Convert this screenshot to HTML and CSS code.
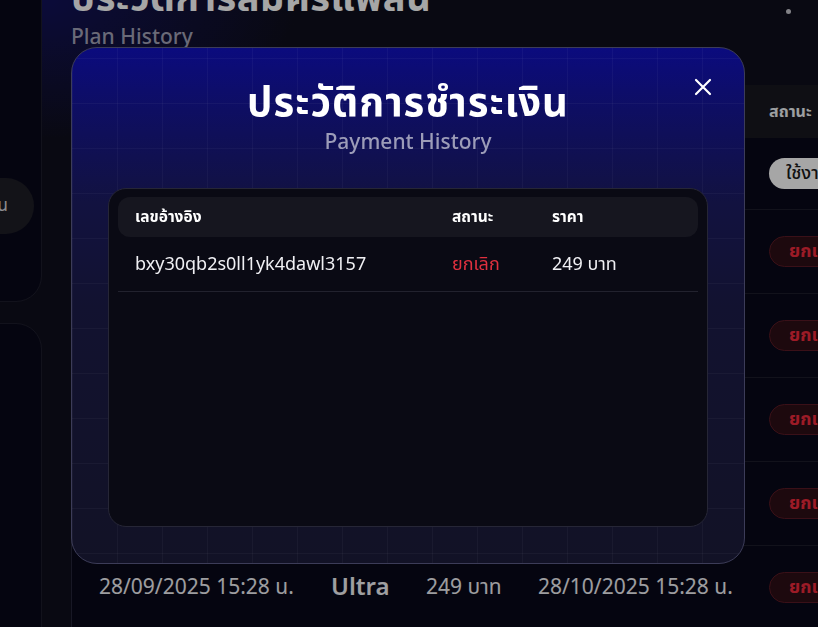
FILE: index.html
```html
<!DOCTYPE html>
<html lang="th">
<head>
<meta charset="utf-8">
<title>Payment History</title>
<link rel="stylesheet" href="styles.css">
</head>
<body>
<div class="page">
  <aside class="sidebar">
    <div class="side-card side-card-top">
      <div class="side-pill">แพลน</div>
    </div>
    <div class="side-card side-card-bottom"></div>
  </aside>
  <main class="main">
    <header class="page-head">
      <h1 class="page-title">ประวัติการสมัครแพลน</h1>
      <p class="page-sub">Plan History</p>
    </header>
    <span class="top-dot"></span>
    <div class="plan-table">
      <div class="pt-row pt-head">
        <div class="pt-cell">วันที่เริ่ม</div>
        <div class="pt-cell">แพลน</div>
        <div class="pt-cell">ราคา</div>
        <div class="pt-cell">วันหมดอายุ</div>
        <div class="pt-cell">สถานะ</div>
      </div>
      <div class="pt-row pt-first">
        <div class="pt-cell pt-date">28/12/2025 15:28 น.</div>
        <div class="pt-cell pt-plan">Ultra</div>
        <div class="pt-cell pt-price">249 บาท</div>
        <div class="pt-cell pt-date">28/01/2026 15:28 น.</div>
        <div class="pt-cell"><span class="badge badge-active">ใช้งาน</span></div>
      </div>
      <div class="pt-row">
        <div class="pt-cell pt-date">28/11/2025 15:28 น.</div>
        <div class="pt-cell pt-plan">Ultra</div>
        <div class="pt-cell pt-price">249 บาท</div>
        <div class="pt-cell pt-date">28/12/2025 15:28 น.</div>
        <div class="pt-cell"><span class="badge badge-cancel">ยกเลิก</span></div>
      </div>
      <div class="pt-row">
        <div class="pt-cell pt-date">28/11/2025 15:28 น.</div>
        <div class="pt-cell pt-plan">Ultra</div>
        <div class="pt-cell pt-price">249 บาท</div>
        <div class="pt-cell pt-date">28/12/2025 15:28 น.</div>
        <div class="pt-cell"><span class="badge badge-cancel">ยกเลิก</span></div>
      </div>
      <div class="pt-row">
        <div class="pt-cell pt-date">28/10/2025 15:28 น.</div>
        <div class="pt-cell pt-plan">Ultra</div>
        <div class="pt-cell pt-price">249 บาท</div>
        <div class="pt-cell pt-date">28/11/2025 15:28 น.</div>
        <div class="pt-cell"><span class="badge badge-cancel">ยกเลิก</span></div>
      </div>
      <div class="pt-row">
        <div class="pt-cell pt-date">28/10/2025 15:28 น.</div>
        <div class="pt-cell pt-plan">Ultra</div>
        <div class="pt-cell pt-price">249 บาท</div>
        <div class="pt-cell pt-date">28/11/2025 15:28 น.</div>
        <div class="pt-cell"><span class="badge badge-cancel">ยกเลิก</span></div>
      </div>
      <div class="pt-row">
        <div class="pt-cell pt-date">28/09/2025 15:28 น.</div>
        <div class="pt-cell pt-plan">Ultra</div>
        <div class="pt-cell pt-price">249 บาท</div>
        <div class="pt-cell pt-date">28/10/2025 15:28 น.</div>
        <div class="pt-cell"><span class="badge badge-cancel">ยกเลิก</span></div>
      </div>
    </div>
  </main>
</div>

<div class="backdrop">
  <section class="modal">
    <button class="modal-close" aria-label="close">
      <svg width="20" height="20" viewBox="0 0 20 20"><path d="M3 3 L17 17 M17 3 L3 17" stroke="#ffffff" stroke-width="2.2" stroke-linecap="round" fill="none"/></svg>
    </button>
    <header class="modal-head">
      <h2 class="modal-title">ประวัติการชำระเงิน</h2>
      <p class="modal-sub">Payment History</p>
    </header>
    <div class="pay-card">
      <div class="pay-row pay-head">
        <div>เลขอ้างอิง</div>
        <div>สถานะ</div>
        <div>ราคา</div>
      </div>
      <div class="pay-row pay-item">
        <div class="pay-ref">bxy30qb2s0ll1yk4dawl3157</div>
        <div class="pay-status">ยกเลิก</div>
        <div class="pay-price">249 บาท</div>
      </div>
    </div>
  </section>
</div>
</body>
</html>
```

FILE: styles.css
```css
* { box-sizing: border-box; }

html, body {
  margin: 0;
  width: 818px;
  height: 627px;
  overflow: hidden;
}

body {
  font-family: "Noto Sans Thai", "Noto Sans", "DejaVu Sans", sans-serif;
  color: #ffffff;
  background:
    radial-gradient(ellipse 260px 140px at 40px 0px, rgba(20, 20, 140, 0.55), rgba(20, 20, 140, 0) 100%),
    #0f0f1c;
}

/* ---------- background page ---------- */
.page {
  display: flex;
  gap: 29px;
  margin-left: -158px;
}

.sidebar {
  width: 200px;
  flex: none;
  display: flex;
  flex-direction: column;
  gap: 21px;
  margin-top: -60px;
}

.side-card {
  background: #09091a;
  border: 1px solid #1d1d2c;
  border-radius: 26px;
}

.side-card-top {
  height: 362px;
  display: flex;
  align-items: flex-start;
  padding-top: 237px;
  padding-left: 60px;
}

.side-pill {
  width: 131px;
  height: 56px;
  border-radius: 28px;
  background: #1e1e26;
  color: #d8d8de;
  font-size: 17px;
  display: flex;
  align-items: center;
  justify-content: flex-end;
  padding-right: 26px;
}

.side-card-bottom {
  height: 400px;
}

.main {
  flex: 1;
  min-width: 760px;
  position: relative;
}

.page-head {
  margin-top: -25px;
}

.page-title {
  margin: 0;
  font-size: 38px;
  line-height: 50px;
  font-weight: 700;
  color: #ffffff;
  letter-spacing: 0.5px;
}

.page-sub {
  margin: 0;
  font-size: 21px;
  line-height: 26px;
  font-weight: 500;
  color: #a4a4b8;
}

.top-dot {
  position: absolute;
  left: 715px;
  top: 9px;
  width: 5px;
  height: 5px;
  border-radius: 50%;
  background: #c8c8d0;
}

.plan-table {
  margin-top: 34px;
  border-left: 1px solid #26263a;
}

.pt-row {
  display: grid;
  grid-template-columns: 249px 95px 112px 231px 200px;
  align-items: center;
  height: 84px;
  border-bottom: 1px solid #1c1c2a;
  background: #09091a;
}

.pt-head {
  height: 53px;
  background: #18181f;
  border-bottom: none;
  font-size: 16px;
  font-weight: 700;
  color: #f0f4f8;
}

.pt-first { height: 72px; }

.pt-cell {
  padding-left: 10px;
  white-space: nowrap;
}

.pt-cell:first-child { padding-left: 27px; }

.pt-date {
  font-size: 21px;
  color: #f2f2f6;
}

.pt-plan {
  font-size: 24px;
  font-weight: 600;
  color: #f4f4f8;
}

.pt-price {
  font-size: 21px;
  color: #f2f2f6;
}

.badge {
  display: inline-flex;
  align-items: center;
  height: 31px;
  padding: 0 19px;
  border-radius: 16px;
  font-size: 18px;
  font-weight: 700;
}

.badge-active {
  background: #ffffff;
  color: #1a1a1a;
  font-weight: 500;
  padding: 0 17px;
}

.badge-cancel {
  background: #2d0e16;
  border: 1px solid #5a1a25;
  color: #f02a3c;
}

/* ---------- modal ---------- */
.backdrop {
  position: fixed;
  inset: 0;
  background: rgba(0, 0, 0, 0.35);
}

.modal {
  position: absolute;
  left: 71px;
  top: 47px;
  width: 674px;
  height: 517px;
  border: 1px solid #3c3c58;
  border-radius: 26px;
  padding: 36px 36px 36px 36px;
  display: flex;
  flex-direction: column;
  background:
    linear-gradient(rgba(255, 255, 255, 0.035) 1px, transparent 1px) 0 10px / 45px 45px,
    linear-gradient(90deg, rgba(255, 255, 255, 0.035) 1px, transparent 1px) 0 0 / 45px 45px,
    linear-gradient(180deg, #0b0b7e 0%, #0e0e62 12%, #121240 30%, #121230 50%, #121226 100%);
}

.modal-close {
  position: absolute;
  right: 31px;
  top: 29px;
  width: 20px;
  height: 20px;
  padding: 0;
  border: none;
  background: none;
  display: flex;
}

.modal-head {
  text-align: center;
}

.modal-title {
  margin: 0;
  font-size: 40px;
  line-height: 40px;
  font-weight: 700;
  color: #ffffff;
  letter-spacing: 1px;
}

.modal-sub {
  margin: 7px 0 0;
  font-size: 21px;
  line-height: 24px;
  font-weight: 500;
  color: #9c9cb8;
}

.pay-card {
  margin-top: 33px;
  flex: 1;
  background: #0a0a14;
  border: 1px solid #262636;
  border-radius: 18px;
  padding: 8px 9px;
}

.pay-row {
  display: grid;
  grid-template-columns: 317px 100px 1fr;
  align-items: center;
  padding-left: 17px;
}

.pay-head {
  height: 40px;
  background: #16161f;
  border-radius: 12px;
  font-size: 15.5px;
  font-weight: 700;
  color: #ffffff;
}

.pay-item {
  height: 55px;
  border-bottom: 1px solid #22222e;
  font-size: 18px;
  color: #f0f0f4;
}

.pay-status { color: #e0303f; }
```
